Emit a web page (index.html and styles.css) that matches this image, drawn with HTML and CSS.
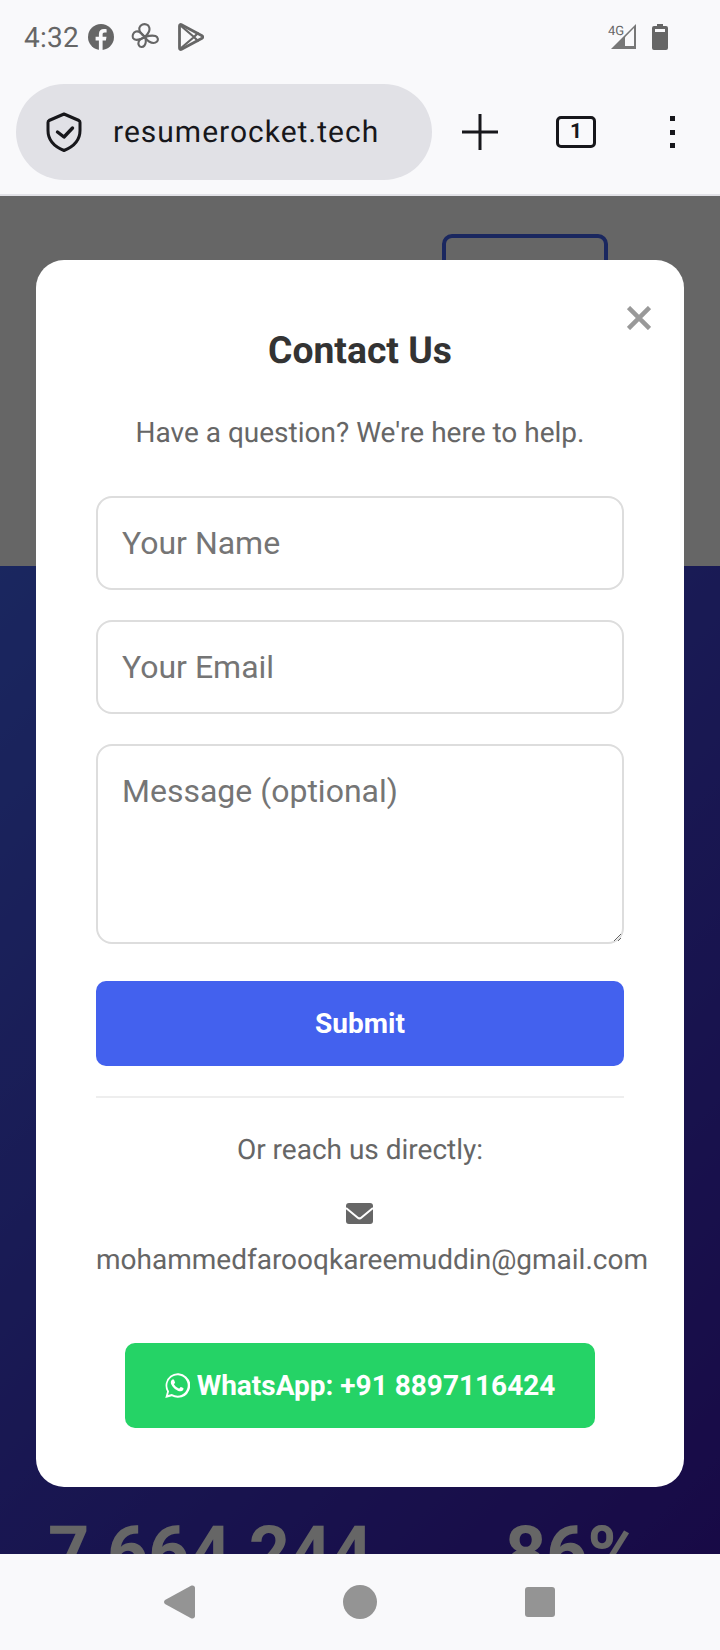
FILE: index.html
```html
<!DOCTYPE html>
<html lang="en">
<head>
<meta charset="utf-8">
<title>Contact Us</title>
<link rel="stylesheet" href="styles.css">
</head>
<body>
<div class="phone">
  <header class="chrome">
    <div class="status">
      <div class="status-left">
        <span class="time">4:32</span>
        <svg class="si" viewBox="0 0 26 26"><circle cx="13" cy="13" r="13" fill="#666"/><path d="M14.600 26V16.500h3.300l.6-3.800h-3.900v-2.300c0-1.100.5-1.900 2-1.900h2V5.200c-.7-.1-1.700-.2-2.700-.2-3 0-5 1.800-5 4.900v2.800H7.600v3.800h3.300V26z" fill="#f9f9fb"/></svg>
        <svg class="si si-fan" viewBox="0 0 28 28" fill="none" stroke="#666" stroke-width="2.100" stroke-linejoin="round">
          <path d="M14 14C10 11 7.500 8 8.500 4.500 9.500 1.500 13 .5 15.500 1.500c3 1 3.500 4.500 2.500 7-1 2.500-2.500 4-4 5.500z"/>
          <path d="M14 14C11 10.500 8.500 7.500 5 8.500 2 9.500 1 13 2 15c1.500 2.500 5 2 7.500 1 1.500-.5 3.500-1 4.500-2z"/>
          <path d="M14 14c3-1 7-2 10.500-1 2.500 1 3 4 1.500 5.500-2 2-5.500 1.500-8 0-2-1-3-3-4-4.500z"/>
          <path d="M14 14c1 3 1 6.500-.5 8.500-1.500 2-4.500 2-5.500 0-1.500-2.500 0-5.500 2-6.500 1.500-1 3-1.500 4-2z"/>
        </svg>
        <svg class="si si-play" viewBox="0 0 26 28" fill="none" stroke="#666" stroke-width="2.800" stroke-linejoin="round"><path d="M1.500 3v22c0 1.200 1 1.800 2 1.300l20.500-11c1-.6 1-2 0-2.600L3.500 1.700C2.500 1.200 1.500 1.800 1.500 3z"/><path d="M2.500 2.500L16 14 2.500 25.500M16 14l4.500-4.500M16 14l4.500 4.500" stroke-width="2.200"/></svg>
      </div>
      <div class="status-right">
        <svg class="sig" viewBox="0 0 28 26"><text x="0" y="11" class="sig-label">4G</text><path d="M28 0v25H3z" fill="#777"/><path d="M17 13.300L26 4v18h-9z" fill="#f9f9fb"/></svg>
        <svg class="bat" viewBox="0 0 16 26"><path d="M5 0h6v2h3a2 2 0 0 1 2 2v20a2 2 0 0 1-2 2H2a2 2 0 0 1-2-2V4a2 2 0 0 1 2-2h3z" fill="#666"/><rect x="3" y="5" width="10" height="3" fill="#f9f9fb"/></svg>
      </div>
    </div>
    <div class="toolbar">
      <div class="omnibox">
        <svg class="shield" viewBox="0 0 36 40" fill="none" stroke="#17171b" stroke-width="3" stroke-linejoin="round" stroke-linecap="round"><path d="M18 2l15 6.500c1 .5 1 1 1 2v8c0 9-6 16-16 20C8 34.500 2 27.500 2 18.500v-8c0-1 0-1.500 1-2z"/><path d="M11.500 20l6.500 5 8.500-9" stroke-width="3.400"/></svg>
        <span class="url">resumerocket.tech</span>
      </div>
      <svg class="plus" viewBox="0 0 36 36" stroke="#17171b" stroke-width="3"><path d="M18 0v36M0 18h36"/></svg>
      <div class="tabs">1</div>
      <div class="kebab"><i></i><i></i><i></i></div>
    </div>
  </header>

  <main class="viewport">
    <section class="hero-top"><div class="cta-outline"></div></section>
    <section class="hero-dark">
      <div class="stats"><span class="stat-a">7,664,244</span><span class="stat-b">86%</span></div>
    </section>
    <div class="scrim"></div>
    <div class="modal">
      <button class="close" aria-label="Close"><svg viewBox="0 0 24 24" stroke="#999" stroke-width="4.500"><path d="M1.500 1.500l21 21M22.500 1.500l-21 21"/></svg></button>
      <h2 class="title">Contact Us</h2>
      <p class="sub">Have a question? We're here to help.</p>
      <form class="form">
        <input class="field" type="text" placeholder="Your Name">
        <input class="field" type="email" placeholder="Your Email">
        <textarea class="field area" placeholder="Message (optional)"></textarea>
        <button class="submit" type="button">Submit</button>
      </form>
      <div class="direct">
        <p class="reach">Or reach us directly:</p>
        <svg class="mail" viewBox="0 0 27 21"><rect width="27" height="21" rx="3" fill="#666"/><path d="M0 5l11.500 9.500a3 3 0 0 0 4 0L27 5" fill="none" stroke="#fff" stroke-width="2"/></svg>
        <p class="email">mohammedfarooqkareemuddin@gmail.com</p>
      </div>
      <a class="wa"><svg class="wa-ico" viewBox="0 0 24 24" fill="#fff"><path d="M17.500 14.400c-.3-.1-1.800-.9-2-1-.3-.1-.5-.1-.7.200-.2.300-.8 1-.9 1.100-.2.200-.3.200-.6.100-.9-.4-2.900-1-4.600-3.700-.2-.3 0-.5.100-.6l.5-.6c.1-.2.200-.3.300-.5.100-.2 0-.4 0-.5-.1-.1-.7-1.600-.9-2.200-.2-.6-.5-.5-.7-.5h-.6c-.2 0-.5.100-.8.400-.3.300-1 1-1 2.500s1.100 2.900 1.200 3.100c.2.200 2.100 3.200 5.100 4.500 1.900.8 2.600.9 3.600.7.600-.1 1.800-.7 2-1.400.3-.7.300-1.300.2-1.400-.1-.1-.3-.2-.7-.4z"/><path d="M20.500 3.500A11.800 11.800 0 0 0 2 17.700L.3 24l6.300-1.600a11.800 11.800 0 0 0 5.400 1.400h.1A11.800 11.800 0 0 0 20.500 3.500zM12 21.800a9.800 9.800 0 0 1-5-1.400l-.4-.2-3.700 1 1-3.600-.2-.4A9.800 9.800 0 1 1 12 21.800z"/></svg><span>WhatsApp: +91 8897116424</span></a>
    </div>
  </main>

  <nav class="sysnav">
    <svg class="nav-back" viewBox="0 0 31 34"><path d="M1 15L27 .8c2-.8 4 0 4 2.200v28c0 2.200-2 3-4 2.200L1 19c-1.300-1-1.300-3 0-4z" fill="#949494"/></svg>
    <span class="nav-home"></span>
    <span class="nav-recent"></span>
  </nav>
</div>
</body>
</html>
```

FILE: styles.css
```css
* { box-sizing: border-box; }
html, body { margin: 0; padding: 0; }
body { font-family: Roboto, "Noto Sans", sans-serif; background: #f9f9fb; text-rendering: geometricPrecision; }
.phone { width: 720px; height: 1650px; display: flex; flex-direction: column; overflow: hidden; }

.chrome { height: 196px; flex: none; background: #f9f9fb; border-bottom: 2px solid #e2e2e7; }
.status { height: 74px; display: flex; justify-content: space-between; align-items: center; padding: 0 52px 0 24px; }
.status-left { display: flex; align-items: center; }
.time { font-size: 28px; color: #666; margin-right: 9px; letter-spacing: .25px; }
.si { width: 26px; height: 26px; display: block; }
.si-fan { width: 28px; height: 28px; margin-left: 17px; }
.si-play { width: 26px; height: 28px; margin-left: 19px; }
.status-right { display: flex; align-items: center; gap: 16px; }
.sig { width: 28px; height: 26px; display: block; }
.sig-label { font: 13px Roboto, sans-serif; fill: #666; }
.bat { width: 16px; height: 26px; display: block; }

.toolbar { height: 96px; margin-top: 10px; display: flex; align-items: center; padding-left: 16px; }
.omnibox { width: 416px; height: 96px; background: #e1e1e6; border-radius: 48px; display: flex; align-items: center; padding-left: 30px; }
.shield { width: 36px; height: 40px; flex: none; display: block; }
.url { font-size: 30px; color: #17171b; margin-left: 31px; letter-spacing: 1px; }
.plus { width: 36px; height: 36px; margin-left: 30px; display: block; flex: none; }
.tabs { width: 40px; height: 32px; margin-left: 58px; flex: none; border: 3px solid #17171b; border-radius: 5px; font-size: 21px; font-weight: 700; color: #17171b; display: flex; align-items: center; justify-content: center; }
.kebab { margin-left: 74px; display: flex; flex-direction: column; gap: 8.500px; }
.kebab i { display: block; width: 5px; height: 5px; background: #17171b; }

.viewport { flex: 1; position: relative; overflow: hidden; background: #fff; }
.hero-top { height: 370px; display: flex; justify-content: flex-end; padding: 38px 112px 0 0; }
.cta-outline { width: 166px; height: 100px; border: 4px solid #4361ee; border-radius: 10px; }
.hero-dark { height: 1320px; background: linear-gradient(135deg, #4361ee, #3a0ca3); padding: 951px 0 0 48px; }
.stats { display: flex; color: #fff; font-size: 72px; font-weight: 700; line-height: 1; }
.stat-a { width: 457px; }
.scrim { position: absolute; inset: 0; background: rgba(0, 0, 0, .6); }

.modal { position: absolute; left: 36px; top: 64px; width: 648px; height: 1227px; background: #fff; border-radius: 28px; padding: 0 60px; display: flex; flex-direction: column; align-items: stretch; }
.close { position: absolute; right: 33px; top: 46px; width: 24px; height: 24px; padding: 0; border: 0; background: none; }
.close svg { display: block; width: 24px; height: 24px; }
.title { margin: 70px 0 0; font-size: 37.300px; line-height: 42px; font-weight: 700; color: #333; text-align: center; }
.sub { margin: 45px 0 0; font-size: 28px; line-height: 32px; color: #666; text-align: center; }
.form { display: flex; flex-direction: column; margin-top: 47px; }
.field { display: block; width: 100%; height: 94px; margin: 0 0 30px; border: 2px solid #ddd; border-radius: 16px; padding: 0 24px; font: 32px Roboto, sans-serif; color: #333; background: #fff; outline: 0; }
.field::placeholder { color: #757575; opacity: 1; }
.area { height: 200px; padding-top: 27px; line-height: 37px; resize: vertical; margin-bottom: 37px; }
.submit { height: 85px; border: 0; border-radius: 10px; background: #4361ee; color: #fff; font: 700 28px Roboto, sans-serif; }
.direct { margin: 30px -24px 0 0; text-align: left; }
.direct::before { content: ""; display: block; height: 2px; background: #eee; margin-right: 24px; }
.reach { margin: 36px 24px 0 0; font-size: 28px; line-height: 32px; color: #666; text-align: center; }
.mail { display: block; width: 27px; height: 21px; margin: 36.500px 0 0 250px; }
.email { margin: 20px 0 0; font-size: 28px; line-height: 32px; color: #666; white-space: nowrap; }
.wa { margin: 67px 29px 0; height: 85px; background: #25d366; border-radius: 10px; color: #fff; font-size: 28px; font-weight: 700; display: flex; align-items: center; justify-content: center; gap: 7px; }
.wa-ico { width: 25px; height: 25px; display: block; flex: none; }

.sysnav { height: 96px; flex: none; position: relative; background: #f9f9fb; }
.nav-back { position: absolute; left: 164px; top: 31px; width: 31px; height: 34px; }
.nav-home { position: absolute; left: 343px; top: 31px; width: 34px; height: 34px; border-radius: 50%; background: #949494; }
.nav-recent { position: absolute; left: 525px; top: 33px; width: 30px; height: 30px; border-radius: 3px; background: #949494; }
```
